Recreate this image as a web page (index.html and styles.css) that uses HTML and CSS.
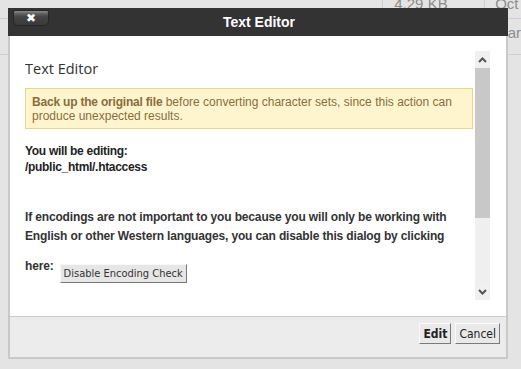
FILE: index.html
```html
<!DOCTYPE html>
<html>

<head>
    <meta charset="UTF-8">
    <title>Text Editor</title>
    <link rel="stylesheet" href="styles.css">
</head>

<body>
    <!-- file list behind the dialog -->
    <div class="page">
        <table class="files">
            <tr class="row-top">
                <td class="c-name"></td>
                <td class="c-size">4.29 KB</td>
                <td class="c-date">Oct</td>
            </tr>
            <tr class="row-next">
                <td class="c-name"></td>
                <td class="c-size"></td>
                <td class="c-date">Mar</td>
            </tr>
        </table>
    </div>

    <div class="dialog">
        <div class="dialog-title">
            <button class="close" type="button">&#x2716;</button>
            <span class="title-text">Text Editor</span>
        </div>
        <div class="dialog-body">
            <div class="scroll">
                <div class="scroll-content">
                    <h2 class="heading">Text Editor</h2>
                    <div class="warn">
                        <b>Back up the original file</b> before converting character sets, since this action can produce unexpected results.
                    </div>
                    <div class="editing">
                        You will be editing:<br/>/public_html/.htaccess
                    </div>
                    <p class="intro">
                        If encodings are not important to you because you will only be working with English or other Western languages, you can disable this dialog by clicking here:<button class="small-btn" type="button">Disable Encoding Check</button>
                    </p>
                </div>
                <div class="scrollbar">
                    <div class="sb-btn">
                        <svg width="9" height="6" viewBox="0 0 9 6"><polyline points="1,5 4.5,1.5 8,5" fill="none" stroke="#555" stroke-width="2"/></svg>
                    </div>
                    <div class="sb-thumb"></div>
                    <div class="sb-track"></div>
                    <div class="sb-btn">
                        <svg width="9" height="6" viewBox="0 0 9 6"><polyline points="1,1 4.5,4.5 8,1" fill="none" stroke="#555" stroke-width="2"/></svg>
                    </div>
                </div>
            </div>
        </div>
        <div class="dialog-foot">
            <button class="foot-btn bold" type="button">Edit</button>
            <button class="foot-btn" type="button">Cancel</button>
        </div>
    </div>
</body>

</html>
```

FILE: styles.css
```css
body {
    margin: 0;
    background-color: #e4e4e4;
    font-family: "Liberation Sans", Arial, sans-serif;
}

.page {
    height: 369px;
    overflow: hidden;
}

.files {
    border-collapse: collapse;
    width: 521px;
    margin-top: -12px;
    font-size: 15px;
    color: #8c8c8c;
}

.files td {
    padding: 0;
    border-bottom: 1px solid #cfcfcf;
}

.row-top td {
    height: 30px;
    vertical-align: middle;
}

.row-next td {
    height: 27px;
    padding-bottom: 8px;
    vertical-align: middle;
}

.c-name {
    width: 383px;
    border-right: 1px solid #cfcfcf;
}

.c-size {
    width: 90px;
    padding-left: 11px !important;
    border-right: 1px solid #cfcfcf;
}

.c-date {
    padding-left: 10px !important;
}

.dialog {
    position: absolute;
    left: 8px;
    top: 8px;
    width: 500px;
    box-sizing: border-box;
    border: 2px solid #c9c9c9;
    border-top: none;
    background-color: #fff;
    display: flex;
    flex-direction: column;
}

.dialog-title {
    height: 28px;
    margin: 0 -2px;
    background-color: #333;
    display: grid;
    grid-template-columns: 1fr auto 1fr;
    align-items: center;
}

.close {
    grid-column: 1;
    justify-self: start;
    align-self: start;
    margin: 2px 0 0 5px;
    width: 36px;
    height: 16px;
    padding: 0;
    border: 1px solid #262626;
    border-radius: 2px 2px 5px 5px;
    background: linear-gradient(#8a8a8a 0, #5c5c5c 3px, #444 6px, #3a3a3a 100%);
    color: #fff;
    font-size: 12px;
    font-weight: bold;
    line-height: 13px;
    font-family: "DejaVu Sans", sans-serif;
}

.title-text {
    grid-column: 2;
    color: #fff;
    font-size: 14px;
    font-weight: bold;
    padding-left: 2px;
}

.dialog-body {
    height: 280px;
    box-sizing: border-box;
    padding: 15px 16px 16px 15px;
}

.scroll {
    height: 249px;
    display: flex;
}

.scroll-content {
    flex: 1;
    overflow: hidden;
    font-size: 12px;
    color: #333;
}

.heading {
    margin: 8px 0 9px;
    font-family: "Open Sans", sans-serif;
    font-size: 14.5px;
    font-weight: normal;
    line-height: 20px;
    color: #333;
}

.warn {
    margin-right: 2px;
    padding: 6px 6px 5px;
    border: 1px solid #e6d885;
    background-color: #fef5cf;
    color: #8a6d3b;
    line-height: 14px;
}

.warn b {
    letter-spacing: -0.2px;
}

.editing {
    margin-top: 14px;
    line-height: 16px;
    font-weight: bold;
    letter-spacing: -0.3px;
    color: #222;
}

.intro {
    margin: 33px 0 0;
    line-height: 19px;
    font-weight: bold;
    letter-spacing: -0.15px;
    color: #333;
}

.small-btn {
    margin: 18px 0 0 6px;
    vertical-align: -7px;
    height: 19px;
    padding: 0 3px;
    border: 1px solid;
    border-color: #f8f8f8 #777 #777 #f8f8f8;
    background-color: #e6e6e6;
    font-family: "DejaVu Sans Condensed", "DejaVu Sans", sans-serif;
    font-size: 11px;
    letter-spacing: 0;
    color: #333;
}

.scrollbar {
    width: 15px;
    display: flex;
    flex-direction: column;
    background-color: #efefef;
}

.sb-btn {
    height: 17px;
    display: flex;
    align-items: center;
    justify-content: center;
    background-color: #f0f0f0;
}

.sb-thumb {
    height: 150px;
    background-color: #c8c8c8;
}

.sb-track {
    flex: 1;
}

.dialog-foot {
    height: 34px;
    border-top: 1px solid #cacaca;
    background-color: #ececec;
    display: flex;
    justify-content: flex-end;
    align-items: flex-start;
    gap: 4px;
    padding: 6px 6px 0 0;
    box-sizing: content-box;
}

.foot-btn {
    height: 21px;
    padding: 0 3px;
    border: 1px solid;
    border-color: #fafafa #7a7a7a #7a7a7a #fafafa;
    background-color: #e9e9e9;
    font-family: "DejaVu Sans Condensed", "DejaVu Sans", sans-serif;
    font-size: 12px;
    color: #222;
}

.foot-btn.bold {
    font-weight: bold;
}
```
